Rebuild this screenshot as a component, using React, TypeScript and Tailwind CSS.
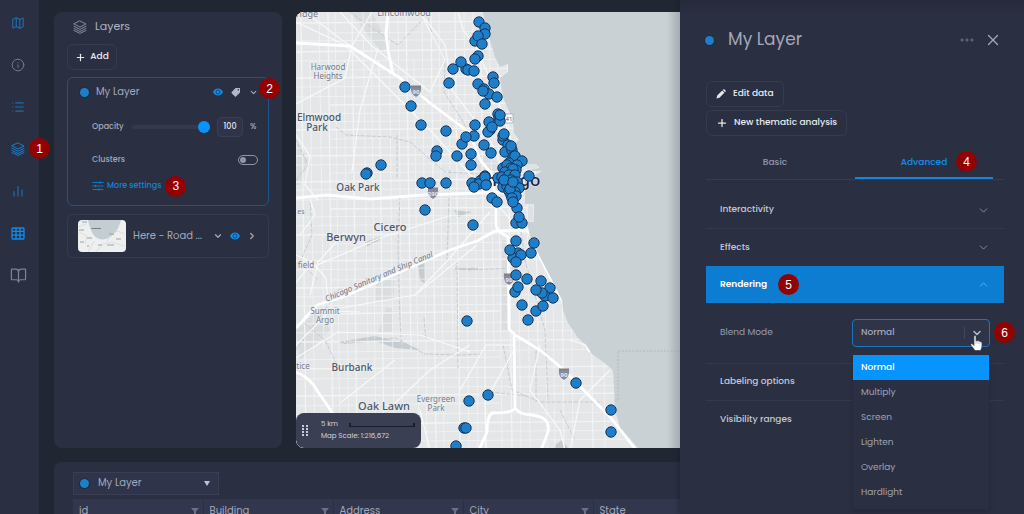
import React from "react";
import {
  BookOpen,
  ChevronDown,
  ChevronRight,
  ChevronUp,
  Info,
  List,
  Map as MapIcon,
  Plus,
  X,
} from "lucide-react";

const POINTS: [number, number][] = [
  [479, 22], [485, 28], [485, 34], [475, 41], [478, 36], [482, 44], [478, 56], [475, 59],
  [466, 69], [461, 62], [453, 69], [468, 70], [474, 71], [449, 83], [405, 87], [411, 106],
  [421, 125], [446, 131], [475, 125], [474, 136], [462, 144], [466, 137], [437, 151], [436, 156],
  [457, 156], [471, 154], [471, 165], [381, 165], [367, 173], [366, 174], [493, 77], [494, 83],
  [478, 84], [484, 89], [489, 94], [483, 91], [497, 97], [485, 104], [498, 114], [499, 118],
  [500, 121], [500, 115], [489, 122], [490, 130], [488, 132], [492, 127], [503, 140], [503, 136],
  [504, 134], [484, 145], [491, 153], [508, 145], [505, 152], [512, 150], [511, 146], [513, 157],
  [515, 156], [522, 161], [509, 163], [503, 168], [517, 165], [507, 165], [511, 168], [505, 172],
  [516, 170], [513, 169], [498, 178], [502, 177], [509, 175], [515, 175], [504, 181], [511, 180],
  [517, 182], [503, 187], [507, 186], [513, 184], [519, 188], [509, 191], [515, 192], [511, 195],
  [516, 196], [510, 189], [504, 180], [513, 182], [529, 176], [485, 176], [486, 184], [492, 198],
  [497, 202], [512, 198], [517, 208], [513, 202], [516, 223], [522, 223], [519, 217], [516, 241],
  [534, 243], [518, 253], [513, 258], [521, 255], [510, 250], [531, 253], [516, 262], [516, 275],
  [527, 279], [541, 281], [515, 292], [518, 287], [550, 288], [545, 296], [542, 293], [536, 290],
  [553, 298], [522, 305], [536, 311], [543, 306], [528, 320], [422, 183], [430, 183], [446, 183],
  [425, 210], [472, 183], [480, 181], [479, 184], [485, 177], [486, 185], [474, 187], [473, 225],
  [467, 321], [469, 401], [488, 395], [576, 383], [611, 410], [611, 432], [464, 428], [466, 428],
  [456, 446],
];

const STREETS_X = [303, 312, 321, 330, 337, 346, 354, 365, 373, 381, 391, 400, 408, 416, 424, 433, 441, 450, 457, 466, 475, 483, 491, 499, 509, 518, 527, 535, 544, 552, 561, 570, 580, 590, 602];
const STREETS_Y = [22, 32, 40, 51, 60, 69, 77, 86, 96, 104, 113, 121, 129, 138, 147, 155, 164, 172, 181, 189, 199, 208, 216, 225, 234, 243, 251, 260, 269, 279, 287, 296, 305, 313, 323, 332, 341, 351, 359, 368, 378, 387, 395, 405, 414, 423, 432, 441];

const HIGHWAYS = [
  "M296 43L350 46L400 78L430 103L470 133L480 160L492 174L496 203V226Q498 232 508 237L509 329L515 335L540 350L564 370L611 418L636 450",
  "M388 12L386 34L388 50L393 73",
  "M296 198L327 195L370 199L423 195L508 192",
  "M296 328L317 305L343 297L450 250L477 241L495 231L528 230L540 257L562 300L590 352",
  "M514 335L515 408Q513 413 492 413Q487 416 487 432L479 450",
  "M515 408Q520 415 532 415Q551 417 548 432L541 450",
  "M296 372Q311 378 318 392Q326 403 333 414",
];

const MINOR_ROADS = [
  "M296 22L345 45L392 92L430 130L520 230",
  "M340 12L372 46L430 92L445 60L420 12",
  "M296 104L345 78L352 46M352 46L372 12M305 12L350 46",
  "M378 48L360 110L352 172",
  "M420 12L445 45L452 90L490 140L505 175",
  "M458 12L463 30L478 50L498 100L514 150L524 190",
  "M452 215L380 238L306 270L296 283M490 212L448 260L415 295L330 310",
  "M296 255L312 262L326 278L328 305",
  "M309 196L315 215L300 235M344 233L318 262L310 295",
  "M415 295L477 245M296 345L330 311L360 312",
  "M296 358L338 332L420 335L470 352M395 403L430 370L470 345",
  "M460 390L486 345L515 345M540 345L530 390L560 430L565 450",
  "M395 360L340 403M570 450L580 400L610 370M600 350L570 340",
  "M514 350L485 402L486 448M420 410L430 450",
  "M296 135L310 156L305 185L318 200",
];

const RAILS = [
  "M350 12L375 30L398 45L430 12M427 12L432 35L445 60L444 92L462 120L478 150",
  "M336 127L346 135L390 137L410 142L445 172L480 174M397 135V178",
  "M400 196L398 246L400 320L402 350M450 170L447 260M457 260L458 370",
  "M296 180L308 165L296 140M310 196L312 235L300 262L318 280",
  "M296 350L340 288L350 296M300 320L325 340L340 372",
  "M340 342L395 338L425 354L462 355L480 354M503 345L512 390L540 402H602",
  "M518 210L525 260L545 330L548 400M536 345V402M560 410L575 440",
  "M424 318L426 340M468 270L515 268M490 392L528 396",
];

type LabelSpec = { x: number; y: number; size: number; text: string; bold?: boolean };
const LABELS: LabelSpec[] = [
  { x: 307, y: 17, size: 9, text: "ridge" },
  { x: 404, y: 16, size: 9, text: "Lincolnwood" },
  { x: 328, y: 70, size: 8, text: "Harwood" },
  { x: 328, y: 79, size: 8, text: "Heights" },
  { x: 319, y: 121, size: 10, text: "Elmwood", bold: true },
  { x: 317, y: 131, size: 10, text: "Park", bold: true },
  { x: 358, y: 191, size: 10, text: "Oak Park", bold: true },
  { x: 390, y: 231, size: 11, text: "Cicero", bold: true },
  { x: 346, y: 241, size: 11, text: "Berwyn", bold: true },
  { x: 306, y: 268, size: 8, text: "field" },
  { x: 301, y: 214, size: 7, text: "es" },
  { x: 325, y: 314, size: 8, text: "Summit" },
  { x: 325, y: 323, size: 8, text: "Argo" },
  { x: 303, y: 369, size: 8, text: "tice" },
  { x: 352, y: 371, size: 10, text: "Burbank", bold: true },
  { x: 384, y: 410, size: 11, text: "Oak Lawn", bold: true },
  { x: 436, y: 402, size: 8, text: "Evergreen" },
  { x: 436, y: 411, size: 8, text: "Park" },
];

const COLUMNS = ["id", "Building", "Address", "City", "State"];
const MODES = ["Normal", "Multiply", "Screen", "Lighten", "Overlay", "Hardlight"];

function LayersIcon({ className }: { className?: string }) {
  return (
    <svg viewBox="0 0 14 14" className={className} fill="none" stroke="currentColor" strokeWidth="1" strokeLinejoin="round" strokeLinecap="round">
      <path d="M7 1L13 4L7 7L1 4Z" />
      <path d="M1 6.300L7 9.300L13 6.300" />
      <path d="M1 8.500L7 11.500L13 8.500" />
      <path d="M1 10.500L7 13.400L13 10.500" />
    </svg>
  );
}

function BarsIcon({ className }: { className?: string }) {
  return (
    <svg viewBox="0 0 12 12" className={className} fill="none" stroke="currentColor" strokeWidth="1.200">
      <path d="M2 6V11.500M6 1V11.500M10 4.500V11.500" />
    </svg>
  );
}

function GridIcon({ className }: { className?: string }) {
  return (
    <svg viewBox="0 0 14 13" className={className} fill="none" stroke="currentColor" strokeWidth="1.300">
      <rect x="1" y="1" width="12" height="11" rx="1" />
      <path d="M1 4.300H13M1 8.200H13M5 1V12M9 1V12" />
    </svg>
  );
}

function EyeIcon() {
  return (
    <svg viewBox="0 0 10 8" className="h-2 w-2.5">
      <path d="M0 4C1.400 1.500 3 .6 5 .6S8.600 1.500 10 4C8.600 6.500 7 7.400 5 7.400S1.400 6.500 0 4Z" fill="#0c8ff0" />
      <circle cx="5" cy="4" r="2" fill="none" stroke="#2b2f42" strokeWidth=".8" />
    </svg>
  );
}

function TagIcon() {
  return (
    <svg viewBox="0 0 10 10" className="size-2.5">
      <path d="M4.600 1H9V5.400L5 9.500Q4.400 9.900 3.900 9.400L.7 6.200Q.2 5.600.7 5Z" fill="#b3b8c8" />
      <circle cx="7.300" cy="2.700" r=".8" fill="#2b2f42" />
    </svg>
  );
}

function SlidersIcon() {
  return (
    <svg viewBox="0 0 12 10" className="h-2.5 w-3" fill="none" stroke="#0f76c8" strokeWidth="1">
      <path d="M.5 1.500H11.500M.5 5H11.500M.5 8.500H11.500M8 .2V2.800M3.500 3.700V6.300M7 7.200V9.800" />
    </svg>
  );
}

function PencilIcon() {
  return (
    <svg viewBox="0 0 10 10" className="size-2.5 shrink-0">
      <path d="M.5 9.500L1.200 6.600L6.200 1.600L8.400 3.800L3.400 8.800ZM6.800 1L7.600.3Q8.100 0 8.600.4L9.600 1.400Q10 1.900 9.600 2.400L9 3.200Z" fill="#e4e7ee" />
    </svg>
  );
}

function Badge({ n, className = "" }: { n: number; className?: string }) {
  return (
    <span className={`flex size-[21px] shrink-0 items-center justify-center rounded-full bg-[#930202] font-['Liberation_Sans',sans-serif] text-xs leading-none font-normal text-white ${className}`}>
      {n}
    </span>
  );
}

function Shield({ x, y, text }: { x: number; y: number; text: string }) {
  return (
    <g transform={`translate(${x} ${y})`}>
      <path d="M-5 -5H5Q6 3 0 6Q-6 3 -5 -5Z" fill="#858ca0" />
      <path d="M-5 -5.500H5V-3.500H-5Z" fill="#8b7d83" />
      <text y="3" textAnchor="middle" fontSize="6" fontWeight="700" fill="#e6e8ee">{text}</text>
    </g>
  );
}

function MapView() {
  return (
    <section aria-label="Map" className="relative min-w-0 flex-1 overflow-hidden rounded-l-lg bg-[#c9d1d4]">
      <svg viewBox="296 12 384 436" preserveAspectRatio="xMinYMin slice" className="block size-full font-['Noto_Sans',sans-serif]">
        <defs>
          <linearGradient id="edge" x1="0" x2="1" y1="0" y2="0">
            <stop offset="0" stopColor="#8c9499" stopOpacity="0" />
            <stop offset="1" stopColor="#8c9499" stopOpacity=".6" />
          </linearGradient>
        </defs>
        <rect x="296" y="12" width="384" height="436" fill="#e4e6e8" />
        <g fill="#dadddf">
          <path d="M297 140L308 160L300 185H296ZM376 280H394V300H376ZM386 308H392V332H378ZM296 330L318 310L330 330L300 360Z" />
          <path d="M350 12H372L392 52L380 50ZM470 150L505 165V185L480 175ZM508 240L512 330H502V240Z" />
        </g>
        <g fill="#c5ccd0">
          <path d="M365 242L382 236L380 240L366 247ZM418 265L425 260V284L420 280ZM338 342L375 336L405 343L420 350L395 348L375 341L345 344ZM454 210L472 212L458 217ZM555 445L562 440L568 448H555ZM455 267H478V270H455Z" />
        </g>
        <g stroke="#f4f5f6" strokeWidth=".8" fill="none" opacity=".9">
          {STREETS_X.map((x, i) => (
            <path key={x} d={`M${x - 2} ${i % 4 === 1 ? 60 : 12}L${x + 3} ${i % 5 === 2 ? 350 : 448}`} strokeWidth={i % 3 === 0 ? 1.3 : 0.8} />
          ))}
          {STREETS_Y.map((y, i) => (
            <path key={y} d={`M${i % 4 === 1 ? 330 : 296} ${y + 1}L${i % 5 === 3 ? 500 : 640} ${y - 2}`} strokeWidth={i % 3 === 0 ? 1.3 : 0.8} />
          ))}
        </g>
        <g stroke="#c4c8cc" strokeWidth=".9" strokeDasharray="4 1.500" fill="none">
          {RAILS.map((d) => <path key={d} d={d} />)}
        </g>
        <g stroke="#f8f9f9" strokeWidth="1.200" fill="none">
          {MINOR_ROADS.map((d) => <path key={d} d={d} />)}
        </g>
        <g stroke="#fff" strokeWidth="2.800" fill="none" strokeLinejoin="round">
          {HIGHWAYS.map((d) => <path key={d} d={d} />)}
        </g>
        <path
          d="M483 12L487 30L491 44L495 57L500 67L508 64V72L500 78L503 97L507 107L513 120L514 133L519 140L515 143L522 160L530 166H539V168H532V171H542L534 176L525 180V204H534V222H527L530 237L540 257L552 280L562 300L563 310L568 323L578 338L586 345L592 354L602 361L613 370L614 387L615 410L620 427L638 448H680V12Z"
          fill="#c9d1d4"
        />
        <path d="M526 164H537V169H526ZM528 206H533V220H528Z" fill="#dfe2e4" />
        <path d="M680 351H618V400H615" fill="none" stroke="#aab2b8" strokeWidth=".8" strokeDasharray="2 1.500" />
        <rect x="667" y="12" width="13" height="436" fill="url(#edge)" />
        <g textAnchor="middle" fill="#6d7486" stroke="#eceef0" strokeWidth="1.500" paintOrder="stroke">
          {LABELS.map((l) => (
            <text key={`${l.text}${l.y}`} x={l.x} y={l.y} fontSize={l.size} fontWeight={l.bold ? 500 : 400} fill={l.bold ? "#4f566b" : "#747a8a"}>
              {l.text}
            </text>
          ))}
          <text fontSize="8" fontStyle="italic" transform="translate(380 279) rotate(-23)">Chicago Sanitary and Ship Canal</text>
        </g>
        <Shield x={416} y={91} text="90" />
        <Shield x={433} y={193} text="290" />
        <Shield x={509} y={279} text="90" />
        <Shield x={564} y={374} text="90" />
        <rect x="503" y="114" width="10" height="9" rx="1" fill="#fff" stroke="#8a909e" strokeWidth=".6" />
        <text x="509" y="121" fontSize="6" textAnchor="middle" fill="#4b5266">41</text>
        <text x="508" y="186" fontSize="17" fontWeight="500" textAnchor="middle" fill="#1c2038" stroke="#eceef0" strokeWidth="1" paintOrder="stroke">Chicago</text>
        <g fill="#1e7fc8" stroke="#17345a" strokeWidth="1">
          {POINTS.map(([x, y]) => <circle key={`${x}-${y}`} cx={x} cy={y} r="5.200" />)}
        </g>
      </svg>
      <div className="absolute bottom-0 left-0 flex h-[35px] w-[125px] items-center rounded-lg bg-[#3a3f54] text-[7px] text-[#d0d4de]">
        <svg viewBox="0 0 6 12" className="ml-1.5 h-3 w-1.5" fill="#c9cdd8">
          {[0, 3, 6, 9].map((y) => (
            <g key={y}><rect y={y} width="2" height="2" /><rect x="4" y={y} width="2" height="2" /></g>
          ))}
        </svg>
        <div className="ml-[13px] grow pr-1.5">
          <div className="flex h-3 items-center justify-between">
            <span>5 km</span>
            <span className="h-1 w-[66px] border-x-2 border-b border-[#1a1e2b]" />
          </div>
          <div className="flex h-3 items-center whitespace-nowrap">Map Scale: 1:216,672</div>
        </div>
      </div>
    </section>
  );
}

function Sidebar() {
  const items = [
    { label: "Map", icon: <MapIcon size={14} strokeWidth={2} />, tone: "text-[#1c6cab]" },
    { label: "Info", icon: <Info size={14} strokeWidth={1.700} />, tone: "text-[#737a8e]" },
    { label: "Legend", icon: <List size={14} strokeWidth={2} />, tone: "text-[#1c6cab]" },
    { label: "Layers", icon: <LayersIcon className="size-3.5" />, tone: "text-[#187fce]" },
    { label: "Charts", icon: <BarsIcon className="size-3" />, tone: "text-[#1c6cab]" },
    { label: "Table", icon: <GridIcon className="h-[13px] w-3.5" />, tone: "text-[#0c8ff0]" },
    { label: "Catalog", icon: <BookOpen size={17} strokeWidth={1.700} />, tone: "text-[#7d8497]" },
  ];
  return (
    <nav className="flex w-[39px] shrink-0 flex-col bg-[#2b2f42] pt-0.5 pr-[3px]">
      {items.map((it, i) => (
        <button key={it.label} aria-label={it.label} className={`relative flex h-[42px] w-full shrink-0 items-center justify-center ${it.tone}`}>
          {it.icon}
          {i === 3 && <Badge n={1} className="absolute top-2.5 left-[29px] z-10" />}
        </button>
      ))}
    </nav>
  );
}

function Dot({ className = "" }: { className?: string }) {
  return <span className={`size-[9px] shrink-0 rounded-full bg-[#1e7fc8] ring-1 ring-[#1d2c46] ${className}`} />;
}

function LayersPanel() {
  return (
    <section className="w-[228px] shrink-0 rounded-lg bg-[#2b2f42] px-[13px]">
      <h2 className="flex h-[30px] items-center gap-2 pl-1.5 text-[11px] text-[#b0b5c5]">
        <LayersIcon className="size-3.5 text-[#858b9e]" />
        Layers
      </h2>
      <button className="mt-0.5 flex h-[26px] w-[50px] items-center justify-center gap-1 rounded-md border border-[#363b50] text-[9px] font-medium text-[#e8eaf0]">
        <Plus size={11} strokeWidth={2.500} />
        Add
      </button>
      <article className="relative mt-[7px] h-[129px] rounded-md border border-[#1d5689] text-[#a3a8ba]">
        <header className="flex h-7 items-center pl-3 pr-2.5 text-[10px]">
          <Dot />
          <span className="ml-[7px] grow">My Layer</span>
          <span className="flex items-center gap-2">
            <button aria-label="Toggle visibility"><EyeIcon /></button>
            <button aria-label="Labels"><TagIcon /></button>
            <button aria-label="Collapse layer"><ChevronDown size={9} strokeWidth={3} /></button>
          </span>
        </header>
        <Badge n={2} className="absolute top-0 -right-3" />
        <div className="px-6 text-[8px] font-medium">
          <div className="-mr-4 flex h-[42px] items-center">
            <label htmlFor="opacity" className="w-10">Opacity</label>
            <input
              id="opacity"
              type="range"
              min="0"
              max="100"
              defaultValue="100"
              className="h-1 w-[78px] appearance-none rounded-full bg-[#343950] [&::-webkit-slider-thumb]:size-3 [&::-webkit-slider-thumb]:appearance-none [&::-webkit-slider-thumb]:rounded-full [&::-webkit-slider-thumb]:bg-[#0794ff]"
            />
            <input aria-label="Opacity percent" defaultValue="100" className="ml-[7px] h-5 w-[26px] rounded border border-[#3a3f54] bg-[#2f3449] text-center text-[8px] text-[#e0e3ea]" />
            <span className="ml-[7px]">%</span>
          </div>
          <div className="-mr-3.5 flex h-6 items-center justify-between">
            <label htmlFor="clusters">Clusters</label>
            <span className="relative flex h-2.5 w-5">
              <input id="clusters" type="checkbox" role="switch" className="peer h-2.5 w-5 appearance-none rounded-full border border-[#9096a8]" />
              <span className="pointer-events-none absolute top-0.5 left-0.5 size-1.5 rounded-full bg-[#9096a8]" />
            </span>
          </div>
          <div className="flex h-7 items-center gap-1">
            <button className="flex items-center gap-[3px] text-[#1284dc]">
              <SlidersIcon />
              More settings
            </button>
            <Badge n={3} />
          </div>
        </div>
      </article>
      <article className="mt-2 flex h-11 items-center rounded-md border border-[#363b50] pl-2.5 pr-[11px] text-[10px] text-[#a3a8ba]">
        <svg viewBox="0 0 48 32" className="h-8 w-12 shrink-0 rounded-sm">
          <rect width="48" height="32" rx="2" fill="#eef0f0" />
          <path d="M10 0C13 14 17 19 24 19.500C33 19 40 12 43 0Z" fill="#c4cdd1" />
          <path d="M0 7L8 4M1 12L9 16L7 24M32 14L40 11L47 14M18 32L25 24L33 22L47 26M29 21L32 14M10 32L16 21" fill="none" stroke="#d2d6d8" strokeWidth=".7" />
          <path d="M13.500 8.500H23" stroke="#777f86" strokeWidth="1.200" />
          <path d="M1 10H6M9 18H14M2 22H6M29 25H36M20 25H24M31 14H36M38 19H43M4 2H9M9 26H11" stroke="#9ba2a6" strokeWidth="1" />
        </svg>
        <span className="ml-[7px] grow whitespace-nowrap">Here - Road ...</span>
        <span className="flex items-center gap-[7px]">
          <button aria-label="Expand basemap"><ChevronDown size={10} strokeWidth={3} /></button>
          <button aria-label="Toggle basemap"><EyeIcon /></button>
          <button aria-label="Basemap options"><ChevronRight size={10} strokeWidth={3} /></button>
        </span>
      </article>
    </section>
  );
}

function DataTable() {
  return (
    <section className="h-[52px] shrink-0 overflow-hidden rounded-tl-lg bg-[#2b2f42] pt-2.5 pl-[19px] text-[#a3a8ba]">
      <div className="relative flex h-[23px] w-[146px] items-center border border-[#393e55] bg-[#2f344a]">
        <Dot className="ml-1.5" />
        <select aria-label="Layer" className="h-full grow appearance-none bg-transparent pl-[9px] text-[10px]">
          <option>My Layer</option>
        </select>
        <svg viewBox="0 0 6 5" className="pointer-events-none absolute top-2 right-2 h-[5px] w-1.5"><path d="M0 0H6L3 5Z" fill="#c0c4d0" /></svg>
      </div>
      <table className="mt-1 w-[650px] table-fixed border-collapse bg-[#32374e]">
        <thead>
          <tr>
            {COLUMNS.map((c) => (
              <th key={c} scope="col" className="h-6 w-[130px] border-r border-[#2b2f42] pr-1 pl-1.5 text-left text-[10px] font-normal">
                <span className="flex items-center justify-between">
                  {c}
                  <svg viewBox="0 0 8 7" className="h-[7px] w-2"><path d="M0 0H8L5 3.500V7L3 6V3.500Z" fill="#69708a" /></svg>
                </span>
              </th>
            ))}
          </tr>
        </thead>
      </table>
    </section>
  );
}

function AccordionRow({ label, open = false, line = true, arrow = true }: { label: string; open?: boolean; line?: boolean; arrow?: boolean }) {
  const Arrow = open ? ChevronUp : ChevronDown;
  return (
    <button
      aria-expanded={open}
      className={`flex h-[37px] w-full items-center gap-[11px] px-3.5 text-[9px] ${open ? "bg-[#0d7dd2] font-semibold text-white" : "font-medium text-[#c4c8d5]"} ${line ? "border-b border-[#34394f]" : ""}`}
    >
      {label}
      {open && <Badge n={5} />}
      {arrow && <Arrow size={13} strokeWidth={1.700} className={`ml-auto ${open ? "text-[#58b4f5]" : "text-[#8d93a6]"}`} />}
    </button>
  );
}

function SettingsPanel() {
  return (
    <aside className="flex w-[344px] shrink-0 flex-col bg-linear-to-b from-[#262a3a] to-[#2b2f42] to-3% pr-5 pl-[26px] shadow-[-2px_0_4px_rgba(20,24,34,0.4)]">
      <header className="mt-6 flex h-8 items-center text-[#a3a8ba]">
        <Dot className="-ml-px" />
        <h1 className="ml-3.5 grow text-[17px]">My Layer</h1>
        <button aria-label="More actions" className="mr-2.5">
          <svg viewBox="0 0 14 4" className="h-1 w-3.5" fill="none" stroke="#6d7388"><circle cx="2" cy="2" r="1.100" /><circle cx="7" cy="2" r="1.100" /><circle cx="12" cy="2" r="1.100" /></svg>
        </button>
        <button aria-label="Close" className="mr-0.5"><X size={18} strokeWidth={1.700} /></button>
      </header>
      <div className="mt-[25px] flex flex-col items-start gap-[3px] text-[9px] font-medium whitespace-nowrap text-[#e8eaf0]">
        <button className="flex h-[26px] items-center gap-[7px] rounded-md border border-[#363b50] px-[9px]"><PencilIcon />Edit data</button>
        <button className="flex h-[26px] items-center gap-1.5 rounded-md border border-[#363b50] px-[9px]"><Plus size={12} strokeWidth={2.500} />New thematic analysis</button>
      </div>
      <div role="tablist" className="mt-2 flex h-9 gap-[11px] border-b border-[#363b50] pr-[11px] text-[9px] font-medium">
        <button role="tab" aria-selected="false" className="flex-1 border-b-2 border-transparent pt-1 text-[#9297aa]">Basic</button>
        <button role="tab" aria-selected="true" className="relative flex-1 border-b-2 border-[#1089e4] pt-1 text-[#0c8ff0]">
          Advanced
          <Badge n={4} className="absolute top-[7px] right-4" />
        </button>
      </div>
      <div className="mt-3">
        <AccordionRow label="Interactivity" />
        <AccordionRow label="Effects" line={false} />
        <AccordionRow label="Rendering" open line={false} />
        <div className="flex h-[61px] items-center justify-between border-b border-[#34394f] pr-3.5 pl-3.5">
          <label htmlFor="blend" className="text-[9px] text-[#979cae]">Blend Mode</label>
          <div className="relative w-[138px]">
            <select id="blend" className="block h-7 w-full appearance-none rounded border border-[#1b75bd] bg-[#2f3449] px-2 text-[9px] font-medium text-[#a3a8ba]">
              {MODES.map((m) => <option key={m}>{m}</option>)}
            </select>
            <span className="pointer-events-none absolute top-2 right-[7px] flex h-3 items-center gap-1.5 border-l border-[#42475c] pl-1.5 text-[#b5bac8]">
              <ChevronDown size={12} strokeWidth={3} />
            </span>
            <svg viewBox="0 0 13 16" className="pointer-events-none absolute top-4 right-[7px] z-20 h-4 w-[13px]">
              <path d="M4 1.500Q4 .5 5 .5T6 1.500V6Q7 5.200 8 6Q9 5.400 9.800 6.500Q11.500 6 12 8V11Q12 13 10.500 15.500H5L1.200 10.500Q.3 9 1.300 8.700Q2.500 8.300 4 10.500Z" fill="#fff" stroke="#3b4054" strokeWidth=".7" />
              <path d="M6 6V9M8 6.500V9M9.900 7V9" stroke="#8c91a0" strokeWidth=".5" />
            </svg>
            <Badge n={6} className="absolute top-[3px] -right-[25px]" />
            <ul role="listbox" aria-label="Blend mode options" className="absolute top-full left-0 z-10 mt-2 w-full rounded-b border border-t-0 border-[#272b3c] bg-[#2b2f42] pb-1 text-[9px] text-[#9da2b4] shadow-md">
              {MODES.map((m, i) => (
                <li key={m} role="option" aria-selected={i === 0} className={`flex h-[25px] items-center px-2 ${i === 0 ? "bg-[#0794ff] font-medium text-white" : ""}`}>{m}</li>
              ))}
            </ul>
          </div>
        </div>
        <AccordionRow label="Labeling options" arrow={false} />
        <AccordionRow label="Visibility ranges" line={false} arrow={false} />
      </div>
    </aside>
  );
}

export default function App() {
  return (
    <div className="flex h-screen overflow-hidden bg-[#212633] font-['Poppins','Inter',sans-serif] leading-tight">
      <Sidebar />
      <main className="flex min-w-0 flex-1 flex-col gap-3.5 pt-3 pl-[15px]">
        <div className="flex min-h-0 flex-1 gap-3.5">
          <LayersPanel />
          <MapView />
        </div>
        <DataTable />
      </main>
      <SettingsPanel />
    </div>
  );
}
